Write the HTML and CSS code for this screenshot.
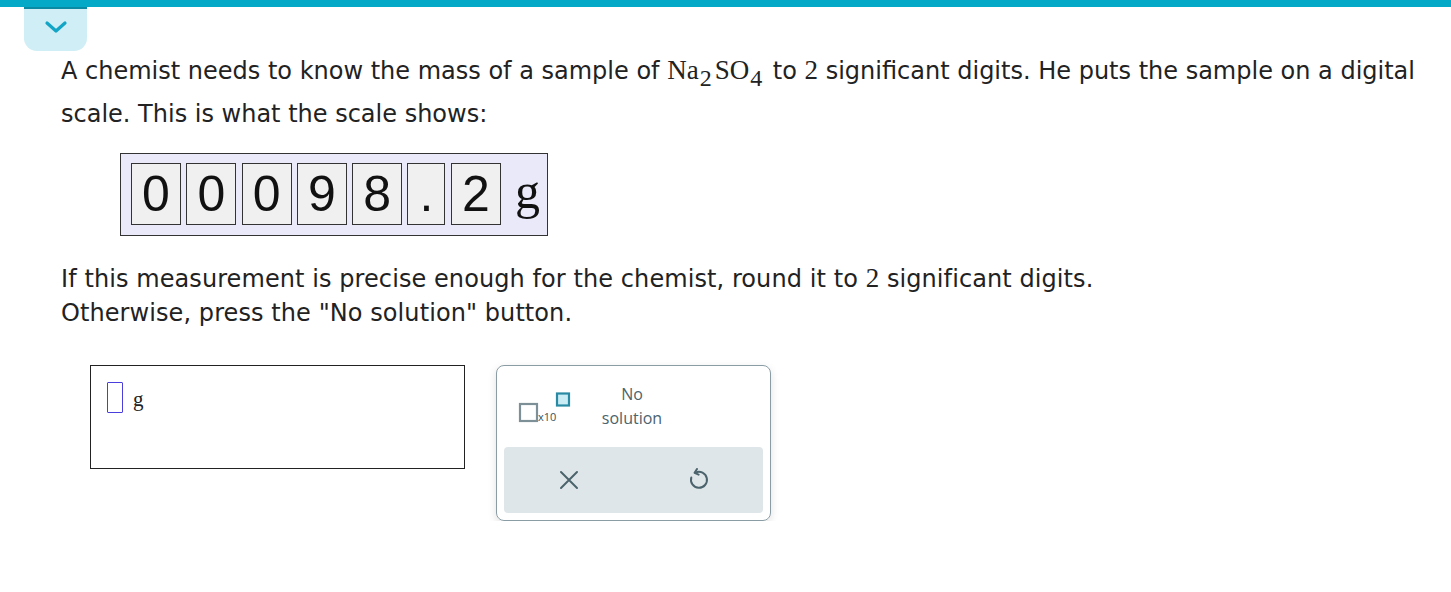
FILE: index.html
```html
<!DOCTYPE html>
<html>
<head>
<meta charset="utf-8">
<link rel="stylesheet" href="styles.css">
</head>
<body>
<div class="topbar"></div>
<div class="tab">
  <svg width="24" height="14" viewBox="0 0 24 14"><path d="M3 3 L12 11 L21 3" fill="none" stroke="#12a5c6" stroke-width="3.2" stroke-linecap="round" stroke-linejoin="round"/></svg>
</div>
<main class="content">
  <p class="q1">A chemist needs to know the mass of a sample of <span class="math">Na<sub>2</sub>SO<sub>4</sub></span> to <span class="math">2</span> significant digits. He puts the sample on a digital scale. This is what the scale shows:</p>
  <div class="scale">
    <span class="digit">0</span>
    <span class="digit">0</span>
    <span class="digit">0</span>
    <span class="digit">9</span>
    <span class="digit">8</span>
    <span class="digit dot">.</span>
    <span class="digit">2</span>
    <span class="unit">g</span>
  </div>
  <p class="q2">If this measurement is precise enough for the chemist, round it to <span class="math">2</span> significant digits.<br>Otherwise, press the "No solution" button.</p>
  <div class="answer-row">
    <div class="answer">
      <span class="slot"></span><span class="aunit">g</span>
    </div>
    <div class="keypad">
      <div class="keys">
        <div class="sci">
          <svg width="54" height="32" viewBox="0 0 54 32">
            <rect x="2" y="12" width="17" height="17" fill="#fff" stroke="#7d9097" stroke-width="2.2"/>
            <text x="20" y="29" font-family="Open Sans, sans-serif" font-size="11" fill="#3c4f57">x10</text>
            <rect x="39" y="1.5" width="12" height="12" fill="#c9ecf5" stroke="#2a8aa3" stroke-width="2.2"/>
          </svg>
        </div>
        <div class="nosol">No<br>solution</div>
      </div>
      <div class="actions">
        <div class="act"><svg width="22" height="22" viewBox="0 0 22 22"><path d="M3 3 L19 19 M19 3 L3 19" stroke="#4b636c" stroke-width="2" stroke-linecap="round"/></svg></div>
        <div class="act"><svg width="22" height="24" viewBox="0 0 22 24"><path d="M8.5 4.6 A8 8 0 1 1 4.3 9.5" fill="none" stroke="#4b636c" stroke-width="2" stroke-linecap="round"/><path d="M10 1 L7.6 4.8 L11.6 6.6" fill="none" stroke="#4b636c" stroke-width="2" stroke-linecap="round" stroke-linejoin="round"/></svg></div>
      </div>
    </div>
  </div>
</main>
</body>
</html>
```
FILE: styles.css
```css
html, body {
  margin: 0;
  padding: 0;
  background: #fff;
}
body {
  font-family: "DejaVu Sans", Verdana, sans-serif;
  color: #222;
}
.topbar {
  height: 7px;
  background: #03a9c6;
}
.tab {
  margin-left: 24px;
  width: 63px;
  height: 42px;
  background: #cfeef5;
  border-top: 2px solid #0b8aa3;
  border-radius: 0 0 13px 13px;
  display: flex;
  justify-content: center;
  align-items: center;
}
.tab svg { margin-top: -6px; }
.content {
  padding-left: 61px;
}
.q1 {
  margin: -1px 0 0;
  width: 1370px;
  font-size: 24px;
  line-height: 43px;
}
.math {
  font-family: "Liberation Serif", "Times New Roman", serif;
  font-size: 27px;
  line-height: 0;
}
.math sub {
  font-size: 24px;
  vertical-align: -7px;
  line-height: 0;
  margin: 0 3px 0 1px;
}
.scale {
  margin: 17px 0 0 59px;
  width: 416px;
  height: 72px;
  padding: 9px 0 0 10px;
  border: 1px solid #333;
  background: #e9e9fa;
  display: flex;
  align-items: flex-start;
  gap: 5.3px;
}
.digit {
  width: 48px;
  height: 60px;
  border: 1px solid #333;
  background: #f0f0f0;
  font-family: "Liberation Sans", Arial, sans-serif;
  font-size: 50px;
  line-height: 60px;
  text-align: center;
  color: #111;
}
.digit.dot { width: 36px; }
.unit {
  font-family: "Liberation Serif", "Times New Roman", serif;
  font-size: 50px;
  line-height: 60px;
  margin-left: 9px;
  margin-top: -2px;
  color: #111;
}
.q2 {
  margin: 26px 0 0;
  font-size: 24px;
  line-height: 34px;
  letter-spacing: 0.08px;
}
.answer-row {
  margin: 35px 0 0 29px;
  display: flex;
  align-items: flex-start;
  gap: 31px;
}
.answer {
  width: 375px;
  height: 104px;
  border: 1.5px solid #222;
  display: flex;
  align-items: flex-start;
  padding: 16px 0 0 16px;
  box-sizing: border-box;
}
.slot {
  width: 14px;
  height: 29px;
  border: 1.5px solid #4a3fdc;
  border-radius: 1px;
}
.aunit {
  font-family: "Liberation Serif", "Times New Roman", serif;
  font-size: 21px;
  margin: 5px 0 0 10px;
  color: #222;
}
.keypad {
  width: 275px;
  height: 156px;
  border: 1px solid #8a9da5;
  border-radius: 8px;
  box-sizing: border-box;
  box-shadow: 0 3px 8px rgba(0,0,0,0.12);
  padding: 7px;
  display: flex;
  flex-direction: column;
}
.keys {
  display: flex;
  align-items: center;
  height: 73px;
}
.sci {
  margin-left: 14px;
  margin-top: 0;
  width: 62px;
}
.nosol {
  margin-left: 12px;
  width: 80px;
  text-align: center;
  font-family: "Open Sans", "DejaVu Sans", sans-serif;
  font-size: 16px;
  line-height: 24px;
  color: #4b636c;
  margin-top: -8px;
}
.actions {
  margin-top: 1px;
  height: 66px;
  background: #dfe6e9;
  border-radius: 4px;
  display: grid;
  grid-template-columns: 1fr 1fr;
  align-items: center;
}
.act {
  display: flex;
  justify-content: center;
  align-items: center;
}
```
